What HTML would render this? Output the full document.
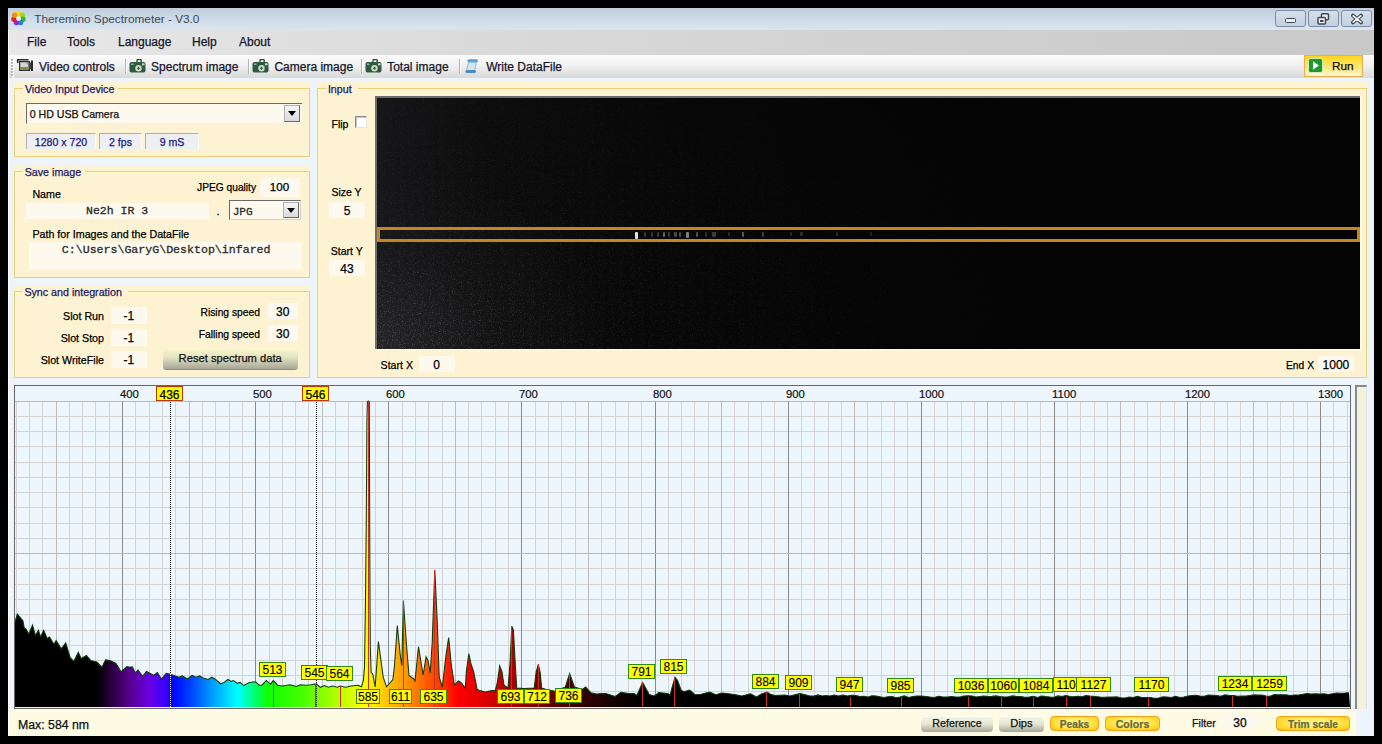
<!DOCTYPE html><html><head><meta charset="utf-8"><style>
*{margin:0;padding:0;box-sizing:border-box}
html,body{width:1382px;height:744px;overflow:hidden;background:#000}
body{position:relative;font-family:"Liberation Sans",sans-serif;font-size:11px;color:#000}
.a{position:absolute}
.t{position:absolute;white-space:nowrap;line-height:1}
#win{position:absolute;left:8px;top:8px;width:1366px;height:728px;background:#edf4fb;overflow:hidden}
.grp{position:absolute;background:#fdf3d3}
.gb{position:absolute;border:1px solid #e9d07c;box-shadow:inset 1px 1px 0 #fffcc8}
.fld{position:absolute;background:#fdf9ee}
.wbtn{position:absolute;top:2px;height:17px;border:1px solid #7d8da3;border-radius:3px;background:linear-gradient(#d6e0ec,#c3d0df)}
</style></head><body><div id="win">
<div class="a" style="left:0px;top:0px;width:1366px;height:22px;background:linear-gradient(#bfcddc,#cfdbe8 50%,#dae5f1)"></div>
<svg class="a" style="left:2px;top:2px" width="17" height="17" viewBox="0 0 17 17">
<circle cx="8.5" cy="3.8" r="2.7" fill="#ffd21e"/><circle cx="12.3" cy="5.3" r="2.7" fill="#9ada2a"/><circle cx="13" cy="9.2" r="2.7" fill="#2eb82e"/>
<circle cx="10.6" cy="12.5" r="2.7" fill="#1e88d0"/><circle cx="6.4" cy="12.5" r="2.7" fill="#8a2ad0"/><circle cx="4" cy="9.2" r="2.7" fill="#e01e1a"/><circle cx="4.7" cy="5.3" r="2.7" fill="#f28a1e"/>
<circle cx="8.5" cy="8.6" r="2.4" fill="#eef2f8"/></svg>

<div class="wbtn" style="left:1267px;width:31px"></div>
<div class="wbtn" style="left:1300px;width:31px"></div>
<div class="wbtn" style="left:1333px;width:31px"></div>
<div class="a" style="left:1277px;top:10px;width:11px;height:5px;border:1.5px solid #404850;border-radius:1.5px;background:#e8eef4"></div>
<svg class="a" style="left:1309px;top:5px" width="13" height="12" viewBox="0 0 13 12"><rect x="4.5" y="0.8" width="7" height="6" rx="1" fill="#eef2f6" stroke="#404850" stroke-width="1.5"/><rect x="1" y="4.5" width="7.5" height="6.5" rx="1" fill="#eef2f6" stroke="#404850" stroke-width="1.5"/><rect x="3" y="7" width="3.5" height="2" fill="#404850"/></svg>
<svg class="a" style="left:1342px;top:5px" width="14" height="12" viewBox="0 0 14 12"><path d="M3,2.6 L11,9.4 M11,2.6 L3,9.4" stroke="#3c4450" stroke-width="3.8" stroke-linecap="round"/><path d="M3.2,2.8 L10.8,9.2 M10.8,2.8 L3.2,9.2" stroke="#f4f6f8" stroke-width="1.7" stroke-linecap="round"/></svg>
<div class="a" style="left:0px;top:22px;width:1366px;height:25px;background:linear-gradient(90deg,#e8e8e8,#d8d8d8 40%,#c8c8c8)"></div>





<div class="a" style="left:0px;top:47px;width:1366px;height:23px;background:linear-gradient(#fbfbfb,#f1f1f1 45%,#d9d9d9)"></div>
<div class="a" style="left:3px;top:51px;width:2px;height:2px;background:#b4b8be;box-shadow:1px 1px 0 #fff"></div>
<div class="a" style="left:3px;top:54px;width:2px;height:2px;background:#b4b8be;box-shadow:1px 1px 0 #fff"></div>
<div class="a" style="left:3px;top:57px;width:2px;height:2px;background:#b4b8be;box-shadow:1px 1px 0 #fff"></div>
<div class="a" style="left:3px;top:60px;width:2px;height:2px;background:#b4b8be;box-shadow:1px 1px 0 #fff"></div>
<div class="a" style="left:3px;top:63px;width:2px;height:2px;background:#b4b8be;box-shadow:1px 1px 0 #fff"></div>
<div class="a" style="left:3px;top:66px;width:2px;height:2px;background:#b4b8be;box-shadow:1px 1px 0 #fff"></div>
<svg class="a" style="left:8px;top:50px" width="18" height="15" viewBox="0 0 18 15"><path d="M1.7,5 V1.7 H12.5" fill="none" stroke="#2c2c2c" stroke-width="1.6"/><rect x="3.5" y="3.5" width="10" height="9" fill="#7c7c7c" stroke="#2e2e2e" stroke-width="1"/><rect x="4.5" y="4.5" width="7.5" height="4.5" fill="#d6d6d6"/><rect x="10.5" y="4.5" width="1.8" height="1.8" fill="#e06a6a"/><rect x="4.5" y="9.5" width="8" height="2.2" fill="#8c8c40"/><rect x="13.5" y="4.5" width="1.5" height="7" fill="#505050"/><rect x="15" y="2.5" width="2" height="10.5" fill="#2a2a2a"/></svg>
<div class="a" style="left:117px;top:51px;width:1px;height:15px;background:#b4b4b4;box-shadow:1px 0 0 #fff"></div>
<div class="a" style="left:240px;top:51px;width:1px;height:15px;background:#b4b4b4;box-shadow:1px 0 0 #fff"></div>
<div class="a" style="left:353px;top:51px;width:1px;height:15px;background:#b4b4b4;box-shadow:1px 0 0 #fff"></div>
<div class="a" style="left:451px;top:51px;width:1px;height:15px;background:#b4b4b4;box-shadow:1px 0 0 #fff"></div>
<svg class="a" style="left:121px;top:51px" width="17" height="14" viewBox="0 0 17 14"><rect x="8" y="0.6" width="4.2" height="3" rx="0.6" fill="none" stroke="#2a4834" stroke-width="1.3"/><rect x="0.5" y="3" width="16" height="10.5" rx="2" fill="#2e5a40"/><rect x="2" y="4.5" width="2.5" height="1.5" fill="#90b098"/><rect x="13" y="4.3" width="2.5" height="2" fill="#c8e4d0"/><circle cx="9.5" cy="9.3" r="3.2" fill="#d4dcc8"/><path d="M9.5,7.8V10.8M8,9.3H11" stroke="#2e5a40" stroke-width="1.1"/></svg>
<svg class="a" style="left:244px;top:51px" width="17" height="14" viewBox="0 0 17 14"><rect x="8" y="0.6" width="4.2" height="3" rx="0.6" fill="none" stroke="#2a4834" stroke-width="1.3"/><rect x="0.5" y="3" width="16" height="10.5" rx="2" fill="#2e5a40"/><rect x="2" y="4.5" width="2.5" height="1.5" fill="#90b098"/><rect x="13" y="4.3" width="2.5" height="2" fill="#c8e4d0"/><circle cx="9.5" cy="9.3" r="3.2" fill="#d4dcc8"/><path d="M9.5,7.8V10.8M8,9.3H11" stroke="#2e5a40" stroke-width="1.1"/></svg>
<svg class="a" style="left:357px;top:51px" width="17" height="14" viewBox="0 0 17 14"><rect x="8" y="0.6" width="4.2" height="3" rx="0.6" fill="none" stroke="#2a4834" stroke-width="1.3"/><rect x="0.5" y="3" width="16" height="10.5" rx="2" fill="#2e5a40"/><rect x="2" y="4.5" width="2.5" height="1.5" fill="#90b098"/><rect x="13" y="4.3" width="2.5" height="2" fill="#c8e4d0"/><circle cx="9.5" cy="9.3" r="3.2" fill="#d4dcc8"/><path d="M9.5,7.8V10.8M8,9.3H11" stroke="#2e5a40" stroke-width="1.1"/></svg>
<svg class="a" style="left:456px;top:50px" width="16" height="16" viewBox="0 0 16 16"><path d="M4.5,4 L12.5,4 L10.5,12.5 L2.5,12.5Z" fill="#d2e6f6" stroke="#82acd2" stroke-width="0.8"/><path d="M5,1.2 C2.8,1.2 2.8,4.2 5,4.2 L12.5,4.2 C14.5,4.2 14.5,1.2 12.5,1.2Z" fill="#5c9ed6"/><path d="M3,12 C0.8,12 0.8,15 3,15 L10.5,15 C12.5,15 12.5,12 10.5,12Z" fill="#4a8cc4"/></svg>





<div class="a" style="left:1296px;top:47px;width:59px;height:22px;border:1px solid #e6ae4e;background:linear-gradient(#ffd61a,#ffe66a 50%,#fff6d6)"></div>
<svg class="a" style="left:1300px;top:50px" width="15" height="15" viewBox="0 0 15 15"><rect x="0.5" y="0.5" width="14" height="14" rx="2" fill="#1c9a2c" stroke="#f0fae8" stroke-width="0.7"/><path d="M5,3.2 L10.8,7.5 L5,11.8Z" fill="#fff"/></svg>

<div class="a" style="left:6px;top:74px;width:296px;height:75px;background:#fdf3d3"></div><div class="a" style="left:6px;top:80px;width:296px;height:69px;border:1px solid #e8cf78;box-shadow:inset 1px 1px 0 #fffcc4"></div><div class="a" style="left:14.899999999999999px;top:74px;width:95.0px;height:12px;background:#fdf3d3"></div>
<div class="a" style="left:6px;top:157px;width:296px;height:113px;background:#fdf3d3"></div><div class="a" style="left:6px;top:163px;width:296px;height:107px;border:1px solid #e8cf78;box-shadow:inset 1px 1px 0 #fffcc4"></div><div class="a" style="left:14.7px;top:157px;width:62.0px;height:12px;background:#fdf3d3"></div>
<div class="a" style="left:6px;top:277px;width:296px;height:93px;background:#fdf3d3"></div><div class="a" style="left:6px;top:283px;width:296px;height:87px;border:1px solid #e8cf78;box-shadow:inset 1px 1px 0 #fffcc4"></div><div class="a" style="left:14.399999999999999px;top:277px;width:105.5px;height:12px;background:#fdf3d3"></div>
<div class="a" style="left:309px;top:74px;width:1050px;height:296px;background:#fdf3d3"></div><div class="a" style="left:309px;top:80px;width:1050px;height:290px;border:1px solid #e8cf78;box-shadow:inset 1px 1px 0 #fffcc4"></div><div class="a" style="left:317.9px;top:74px;width:32.0px;height:12px;background:#fdf3d3"></div>
<div class="a" style="left:18px;top:95px;width:276px;height:21px;background:#fdf9ee;border-top:1px solid #6a6a6a;border-left:1px solid #6a6a6a;border-bottom:1px solid #f6f0dc"></div>
<div class="a" style="left:276px;top:97px;width:16px;height:17px;background:linear-gradient(#f6f6f6,#dadada);border:1px solid #b0b0b0;border-right-color:#6a6a6a;border-bottom-color:#6a6a6a"></div>
<svg class="a" style="left:280px;top:103px" width="9" height="5"><path d="M0,0 L8,0 L4,5Z" fill="#000"/></svg>

<div class="a" style="left:18px;top:125px;width:70px;height:16px;background:#eeeff3;border-top:1px solid #b0b0b0;border-left:1px solid #b0b0b0;border-right:1px solid #fcfcfc"></div>

<div class="a" style="left:91px;top:125px;width:43px;height:16px;background:#eeeff3;border-top:1px solid #b0b0b0;border-left:1px solid #b0b0b0;border-right:1px solid #fcfcfc"></div>

<div class="a" style="left:137px;top:125px;width:54px;height:16px;background:#eeeff3;border-top:1px solid #b0b0b0;border-left:1px solid #b0b0b0;border-right:1px solid #fcfcfc"></div>



<div class="a" style="left:252px;top:170px;width:40px;height:19px;background:#fdf9ee"></div>

<div class="a" style="left:18px;top:195px;width:183px;height:16px;background:#fdf9ee"></div>


<div class="a" style="left:221px;top:192px;width:72px;height:20px;background:#fdf9ee;border:1px solid #6a6a6a;border-right-color:#d0d0d0;border-bottom-color:#d0d0d0"></div>
<div class="a" style="left:275px;top:194px;width:16px;height:16px;background:linear-gradient(#f6f6f6,#dadada);border:1px solid #b0b0b0;border-right-color:#6a6a6a;border-bottom-color:#6a6a6a"></div>
<svg class="a" style="left:279px;top:200px" width="9" height="5"><path d="M0,0 L8,0 L4,5Z" fill="#000"/></svg>


<div class="a" style="left:21px;top:234px;width:273px;height:28px;background:#fdf9ee"></div>


<div class="a" style="left:103px;top:299px;width:36px;height:17px;background:#fdf9ee"></div>


<div class="a" style="left:103px;top:321px;width:36px;height:17px;background:#fdf9ee"></div>


<div class="a" style="left:103px;top:343px;width:36px;height:17px;background:#fdf9ee"></div>


<div class="a" style="left:260px;top:295px;width:30px;height:16px;background:#fdf9ee"></div>


<div class="a" style="left:260px;top:317px;width:30px;height:16px;background:#fdf9ee"></div>

<div class="a" style="left:155px;top:342px;width:135px;height:19px;border-radius:3px;background:linear-gradient(#f4f4c6,#e2e2c4 40%,#a6a696);box-shadow:0 1px 0 #8e8e80"></div>


<div class="a" style="left:347px;top:108px;width:12px;height:12px;background:#fff;border:1px solid #8a8a8a;border-right-color:#e4e4e4;border-bottom-color:#e4e4e4;box-shadow:inset 1px 1px 0 #c4c4c4"></div>

<div class="a" style="left:321px;top:194px;width:36px;height:16px;background:#fdf9ee"></div>


<div class="a" style="left:321px;top:252px;width:36px;height:16px;background:#fdf9ee"></div>


<div class="a" style="left:411px;top:348px;width:36px;height:16px;background:#fdf9ee"></div>


<div class="a" style="left:1310px;top:348px;width:36px;height:16px;background:#fdf9ee"></div>

<div class="a" style="left:367px;top:88px;width:985px;height:253px;background:#060607;border-top:2px solid #6c6c6c;border-left:2px solid #6c6c6c;box-shadow:1px 1px 0 #fffbea"></div>
<div class="a" style="left:369px;top:90px;width:983px;height:251px;background:radial-gradient(ellipse 240px 180px at 0% 100%,rgba(40,40,42,.8),rgba(30,30,32,.3) 55%,rgba(0,0,0,0) 100%),linear-gradient(90deg,#161618,#0d0d0e 10%,#080809 28%,#050506 50%,#040405)"></div>
<svg class="a" style="left:369px;top:90px" width="983" height="251"><defs><filter id="nz" x="0" y="0" width="100%" height="100%"><feTurbulence type="fractalNoise" baseFrequency="0.9" numOctaves="2" seed="4"/><feColorMatrix type="matrix" values="0 0 0 0 0.7  0 0 0 0 0.7  0 0 0 0 0.72  0 0 0 1.6 -0.85"/></filter>
<radialGradient id="nm" gradientUnits="userSpaceOnUse" cx="0" cy="251" r="700" gradientTransform="translate(0,251) scale(1,0.55) translate(0,-251)"><stop offset="0" stop-color="#fff" stop-opacity="0.55"/><stop offset="0.3" stop-color="#fff" stop-opacity="0.2"/><stop offset="1" stop-color="#fff" stop-opacity="0.02"/></radialGradient><mask id="mm"><rect width="983" height="251" fill="url(#nm)"/></mask></defs>
<rect width="983" height="251" filter="url(#nz)" mask="url(#mm)"/></svg>
<div class="a" style="left:369px;top:219px;width:983px;height:15px;border:3px solid #c6861f"></div>
<div class="a" style="left:627px;top:224px;width:3px;height:7px;background:rgb(225,225,225);border-radius:1px;filter:blur(0.3px)"></div>
<div class="a" style="left:636px;top:224px;width:2px;height:5px;background:rgb(55,55,55);border-radius:1px;filter:blur(0.3px)"></div>
<div class="a" style="left:643px;top:224px;width:2px;height:5px;background:rgb(50,50,50);border-radius:1px;filter:blur(0.3px)"></div>
<div class="a" style="left:649px;top:224px;width:2px;height:5px;background:rgb(60,60,60);border-radius:1px;filter:blur(0.3px)"></div>
<div class="a" style="left:655px;top:224px;width:2px;height:5px;background:rgb(95,95,95);border-radius:1px;filter:blur(0.3px)"></div>
<div class="a" style="left:660px;top:224px;width:2px;height:5px;background:rgb(55,55,55);border-radius:1px;filter:blur(0.3px)"></div>
<div class="a" style="left:666px;top:224px;width:3px;height:5px;background:rgb(70,70,70);border-radius:1px;filter:blur(0.3px)"></div>
<div class="a" style="left:671px;top:224px;width:2px;height:5px;background:rgb(75,75,75);border-radius:1px;filter:blur(0.3px)"></div>
<div class="a" style="left:678px;top:224px;width:3px;height:6px;background:rgb(125,125,125);border-radius:1px;filter:blur(0.3px)"></div>
<div class="a" style="left:688px;top:224px;width:2px;height:5px;background:rgb(75,75,75);border-radius:1px;filter:blur(0.3px)"></div>
<div class="a" style="left:697px;top:224px;width:2px;height:5px;background:rgb(45,45,45);border-radius:1px;filter:blur(0.3px)"></div>
<div class="a" style="left:704px;top:224px;width:4px;height:5px;background:rgb(60,60,60);border-radius:1px;filter:blur(0.3px)"></div>
<div class="a" style="left:720px;top:224px;width:2px;height:4px;background:rgb(40,40,40);border-radius:1px;filter:blur(0.3px)"></div>
<div class="a" style="left:734px;top:224px;width:2px;height:5px;background:rgb(90,90,90);border-radius:1px;filter:blur(0.3px)"></div>
<div class="a" style="left:754px;top:224px;width:2px;height:5px;background:rgb(60,60,60);border-radius:1px;filter:blur(0.3px)"></div>
<div class="a" style="left:782px;top:224px;width:2px;height:4px;background:rgb(40,40,40);border-radius:1px;filter:blur(0.3px)"></div>
<div class="a" style="left:792px;top:224px;width:3px;height:4px;background:rgb(45,45,45);border-radius:1px;filter:blur(0.3px)"></div>
<div class="a" style="left:828px;top:224px;width:2px;height:4px;background:rgb(40,40,40);border-radius:1px;filter:blur(0.3px)"></div>
<div class="a" style="left:862px;top:224px;width:2px;height:4px;background:rgb(35,35,35);border-radius:1px;filter:blur(0.3px)"></div>
<svg class="a" style="left:6px;top:377px" width="1337" height="324" viewBox="14 385 1337 324" shape-rendering="crispEdges">
<rect x="14" y="385" width="1337" height="324" fill="#edf5fd"/>
<path d="M16.5,402V707M29.5,402V707M42.5,402V707M69.5,402V707M82.5,402V707M95.5,402V707M109.5,402V707M135.5,402V707M149.5,402V707M162.5,402V707M175.5,402V707M202.5,402V707M215.5,402V707M229.5,402V707M242.5,402V707M269.5,402V707M282.5,402V707M295.5,402V707M308.5,402V707M335.5,402V707M348.5,402V707M362.5,402V707M375.5,402V707M402.5,402V707M415.5,402V707M428.5,402V707M442.5,402V707M468.5,402V707M481.5,402V707M495.5,402V707M508.5,402V707M535.5,402V707M548.5,402V707M561.5,402V707M575.5,402V707M601.5,402V707M615.5,402V707M628.5,402V707M641.5,402V707M668.5,402V707M681.5,402V707M694.5,402V707M708.5,402V707M734.5,402V707M748.5,402V707M761.5,402V707M774.5,402V707M801.5,402V707M814.5,402V707M828.5,402V707M841.5,402V707M867.5,402V707M881.5,402V707M894.5,402V707M907.5,402V707M934.5,402V707M947.5,402V707M961.5,402V707M974.5,402V707M1001.5,402V707M1014.5,402V707M1027.5,402V707M1040.5,402V707M1067.5,402V707M1080.5,402V707M1094.5,402V707M1107.5,402V707M1134.5,402V707M1147.5,402V707M1160.5,402V707M1174.5,402V707M1200.5,402V707M1214.5,402V707M1227.5,402V707M1240.5,402V707M1267.5,402V707M1280.5,402V707M1293.5,402V707M1307.5,402V707M1333.5,402V707M1347.5,402V707" stroke="#d3d3d3" stroke-width="1"/>
<path d="M15,416.5H1350M15,431.5H1350M15,446.5H1350M15,462.5H1350M15,477.5H1350M15,492.5H1350M15,507.5H1350M15,523.5H1350M15,538.5H1350M15,568.5H1350M15,584.5H1350M15,599.5H1350M15,614.5H1350M15,630.5H1350M15,645.5H1350M15,660.5H1350M15,675.5H1350M15,691.5H1350" stroke="#d3d3d3" stroke-width="1"/>
<path d="M56.5,402V707M189.5,402V707M322.5,402V707M455.5,402V707M588.5,402V707M721.5,402V707M854.5,402V707M987.5,402V707M1120.5,402V707M1253.5,402V707" stroke="#bcbcbc" stroke-width="1"/>
<path d="M122.5,402V707M255.5,402V707M388.5,402V707M521.5,402V707M655.5,402V707M788.5,402V707M921.5,402V707M1054.5,402V707M1187.5,402V707M1320.5,402V707" stroke="#8a8a8a" stroke-width="1"/>
<path d="M15,401.5H1350M15,553.5H1350" stroke="#a6d06c" stroke-width="1"/>
<path d="M170.5,402V707" stroke="#000" stroke-width="1" stroke-dasharray="1,1"/>
<path d="M316.5,402V707" stroke="#000" stroke-width="1" stroke-dasharray="1,1"/>
<defs><linearGradient id="sg" gradientUnits="userSpaceOnUse" x1="14" y1="0" x2="1350" y2="0"><stop offset="0.0614" stop-color="#000000"/><stop offset="0.0734" stop-color="#2a0040"/><stop offset="0.0868" stop-color="#580090"/><stop offset="0.1018" stop-color="#6a00e6"/><stop offset="0.1138" stop-color="#3a00ff"/><stop offset="0.1183" stop-color="#0000ff"/><stop offset="0.1317" stop-color="#0040ff"/><stop offset="0.1504" stop-color="#00a8ff"/><stop offset="0.1677" stop-color="#00ffff"/><stop offset="0.1781" stop-color="#00ff88"/><stop offset="0.1901" stop-color="#10ff00"/><stop offset="0.2141" stop-color="#40ff00"/><stop offset="0.2365" stop-color="#a0ff00"/><stop offset="0.2530" stop-color="#d8ff00"/><stop offset="0.2635" stop-color="#ffff00"/><stop offset="0.2777" stop-color="#ffc800"/><stop offset="0.2927" stop-color="#ff9800"/><stop offset="0.3076" stop-color="#ff6000"/><stop offset="0.3226" stop-color="#ff2800"/><stop offset="0.3323" stop-color="#ff0000"/><stop offset="0.3488" stop-color="#e40000"/><stop offset="0.3713" stop-color="#b00000"/><stop offset="0.3937" stop-color="#7a0000"/><stop offset="0.4199" stop-color="#3c0000"/><stop offset="0.4461" stop-color="#180000"/><stop offset="0.4686" stop-color="#000000"/></linearGradient></defs>
<path d="M15,707 L15.0,622.0 L17.3,614.0 L22.9,620.7 L24.3,628.0 L25.8,628.8 L28.8,634.0 L32.5,625.0 L35.4,635.5 L38.4,630.3 L40.6,637.0 L43.6,630.3 L47.2,638.4 L49.5,637.0 L53.9,644.3 L56.1,640.6 L61.3,648.8 L65.7,642.9 L70.2,657.6 L73.8,661.3 L78.3,652.5 L81.2,658.4 L86.4,655.4 L90.8,660.6 L96.8,662.0 L101.9,667.2 L105.6,659.8 L110.0,660.6 L116.0,663.5 L121.1,671.7 L127.0,666.5 L130.0,667.3 L132.4,666.8 L135.2,672.9 L138.0,670.1 L142.7,676.2 L146.5,671.5 L153.5,675.3 L157.3,672.5 L161.5,679.0 L166.2,673.4 L169.5,673.9 L173.3,675.3 L178.9,677.2 L182.2,675.8 L187.4,679.0 L192.1,675.3 L195.9,677.2 L199.6,675.8 L203.4,678.1 L208.1,679.5 L211.9,677.2 L215.6,679.5 L220.8,683.8 L224.1,682.4 L227.9,679.5 L231.2,681.4 L233.5,680.5 L237.3,683.3 L240.1,682.4 L243.9,685.6 L245.0,684.7 L249.3,682.6 L255.4,681.7 L259.3,685.2 L261.9,685.2 L266.3,680.4 L270.6,684.3 L273.2,680.4 L277.6,685.2 L281.5,686.0 L285.8,685.6 L290.1,684.7 L296.2,686.5 L300.6,684.7 L305.8,685.2 L311.0,684.7 L316.2,683.9 L320.5,687.3 L324.4,685.6 L328.3,687.3 L332.7,686.0 L337.0,687.3 L340.5,686.0 L345.7,687.3 L350.9,686.0 L357.8,685.2 L361.5,686.8 L363.5,680.0 L364.5,667.0 L365.5,600.0 L366.3,520.0 L366.9,421.0 L367.4,402.0 L368.3,401.0 L369.3,402.0 L369.7,520.0 L370.0,600.0 L370.3,646.5 L371.1,672.3 L372.7,673.9 L375.2,686.8 L378.4,641.6 L380.8,659.4 L383.2,677.1 L386.5,686.8 L392.9,679.5 L394.5,665.8 L397.3,625.5 L400.2,654.5 L401.8,665.8 L403.4,600.5 L406.6,646.5 L409.0,675.5 L412.3,677.9 L413.0,678.0 L415.0,681.0 L418.5,646.7 L421.1,662.8 L423.1,675.0 L426.1,656.8 L428.1,660.8 L430.2,672.9 L432.2,642.7 L434.8,570.1 L437.2,620.5 L439.2,677.0 L442.3,687.0 L446.3,652.7 L448.7,637.6 L451.3,664.8 L454.4,685.0 L458.4,681.0 L461.4,683.0 L465.4,688.0 L466.3,671.8 L468.8,653.7 L471.0,663.8 L473.7,671.8 L477.1,689.3 L479.8,690.6 L485.2,692.0 L491.9,690.6 L495.2,690.6 L497.3,682.6 L499.7,665.8 L502.0,671.8 L504.0,685.3 L508.0,688.0 L510.0,663.8 L511.8,626.1 L513.4,630.2 L515.4,666.5 L516.7,688.0 L524.1,688.6 L534.2,688.0 L536.2,671.8 L538.3,664.4 L540.3,673.2 L541.6,688.0 L548.0,690.0 L555.0,691.3 L565.4,687.0 L569.6,673.4 L574.4,687.0 L582.4,689.4 L585.6,687.0 L590.8,692.7 L596.5,694.1 L601.2,693.6 L605.9,693.6 L615.3,696.5 L620.9,692.2 L628.5,693.6 L634.1,693.6 L636.9,695.5 L642.6,682.4 L649.2,694.6 L653.9,696.0 L657.6,693.6 L658.5,692.5 L668.0,693.4 L670.2,695.1 L671.9,688.2 L675.0,677.3 L677.6,680.4 L681.0,690.0 L683.6,691.7 L689.7,690.0 L695.0,694.7 L701.0,694.3 L709.7,692.1 L715.8,694.7 L721.8,693.0 L727.0,693.4 L735.7,694.7 L741.8,696.0 L750.5,693.8 L756.6,696.9 L760.9,694.3 L767.0,692.1 L770.5,694.3 L775.0,695.6 L780.0,695.2 L785.0,695.0 L790.0,696.0 L800.0,693.6 L810.0,696.0 L814.0,696.1 L818.0,694.9 L822.0,695.9 L826.0,695.5 L830.0,696.0 L834.3,695.0 L838.6,696.0 L842.9,695.1 L847.1,696.0 L851.4,695.3 L855.7,695.4 L860.0,696.5 L864.0,696.2 L868.0,697.1 L872.0,695.7 L876.0,695.9 L880.0,696.8 L884.0,697.5 L888.0,696.8 L892.0,696.5 L896.0,697.7 L900.0,697.0 L904.3,695.9 L908.6,697.5 L912.9,696.4 L917.1,696.1 L921.4,696.0 L925.7,696.4 L930.0,697.0 L934.3,697.4 L938.6,696.2 L942.9,697.0 L947.1,697.1 L951.4,696.5 L955.7,696.9 L960.0,697.0 L964.0,695.9 L968.0,695.8 L972.0,696.1 L976.0,697.0 L980.0,696.4 L984.0,696.1 L988.0,696.6 L992.0,696.3 L996.0,695.9 L1000.0,696.5 L1004.2,696.9 L1008.3,696.8 L1012.5,695.9 L1016.7,696.6 L1020.8,696.6 L1025.0,697.3 L1029.2,697.1 L1033.3,696.2 L1037.5,697.6 L1041.7,696.0 L1045.8,696.6 L1050.0,697.0 L1054.0,697.2 L1058.0,695.9 L1062.0,696.5 L1066.0,695.5 L1070.0,696.6 L1074.0,696.7 L1078.0,696.2 L1082.0,696.8 L1086.0,695.5 L1090.0,696.0 L1100.0,697.0 L1104.2,697.2 L1108.3,697.1 L1112.5,697.1 L1116.7,696.9 L1120.8,697.7 L1125.0,697.9 L1129.2,697.0 L1133.3,697.5 L1137.5,696.3 L1141.7,697.6 L1145.8,697.6 L1150.0,697.5 L1154.3,698.3 L1158.6,697.9 L1162.9,696.9 L1167.1,697.1 L1171.4,697.6 L1175.7,696.3 L1180.0,697.5 L1184.0,696.9 L1188.0,696.0 L1192.0,695.6 L1196.0,695.2 L1200.0,696.0 L1204.2,696.3 L1208.3,695.0 L1212.5,695.2 L1216.7,695.4 L1220.8,696.3 L1225.0,694.7 L1229.2,695.4 L1233.3,695.6 L1237.5,696.2 L1241.7,696.0 L1245.8,696.1 L1250.0,695.5 L1254.0,694.9 L1258.0,695.1 L1262.0,695.0 L1266.0,696.1 L1270.0,696.2 L1274.0,694.6 L1278.0,694.7 L1282.0,694.8 L1286.0,694.8 L1290.0,695.5 L1294.3,695.1 L1298.6,695.0 L1302.9,694.2 L1307.1,693.5 L1311.4,694.1 L1315.7,693.8 L1320.0,694.0 L1324.1,693.8 L1328.3,694.4 L1332.4,693.7 L1336.6,693.1 L1340.7,693.2 L1344.9,693.1 L1349.0,692.8 L1350,707 Z" fill="url(#sg)" shape-rendering="auto"/>
<path d="M15.0,622.0 L17.3,614.0 L22.9,620.7 L24.3,628.0 L25.8,628.8 L28.8,634.0 L32.5,625.0 L35.4,635.5 L38.4,630.3 L40.6,637.0 L43.6,630.3 L47.2,638.4 L49.5,637.0 L53.9,644.3 L56.1,640.6 L61.3,648.8 L65.7,642.9 L70.2,657.6 L73.8,661.3 L78.3,652.5 L81.2,658.4 L86.4,655.4 L90.8,660.6 L96.8,662.0 L101.9,667.2 L105.6,659.8 L110.0,660.6 L116.0,663.5 L121.1,671.7 L127.0,666.5 L130.0,667.3 L132.4,666.8 L135.2,672.9 L138.0,670.1 L142.7,676.2 L146.5,671.5 L153.5,675.3 L157.3,672.5 L161.5,679.0 L166.2,673.4 L169.5,673.9 L173.3,675.3 L178.9,677.2 L182.2,675.8 L187.4,679.0 L192.1,675.3 L195.9,677.2 L199.6,675.8 L203.4,678.1 L208.1,679.5 L211.9,677.2 L215.6,679.5 L220.8,683.8 L224.1,682.4 L227.9,679.5 L231.2,681.4 L233.5,680.5 L237.3,683.3 L240.1,682.4 L243.9,685.6 L245.0,684.7 L249.3,682.6 L255.4,681.7 L259.3,685.2 L261.9,685.2 L266.3,680.4 L270.6,684.3 L273.2,680.4 L277.6,685.2 L281.5,686.0 L285.8,685.6 L290.1,684.7 L296.2,686.5 L300.6,684.7 L305.8,685.2 L311.0,684.7 L316.2,683.9 L320.5,687.3 L324.4,685.6 L328.3,687.3 L332.7,686.0 L337.0,687.3 L340.5,686.0 L345.7,687.3 L350.9,686.0 L357.8,685.2 L361.5,686.8 L363.5,680.0 L364.5,667.0 L365.5,600.0 L366.3,520.0 L366.9,421.0 L367.4,402.0 L368.3,401.0 L369.3,402.0 L369.7,520.0 L370.0,600.0 L370.3,646.5 L371.1,672.3 L372.7,673.9 L375.2,686.8 L378.4,641.6 L380.8,659.4 L383.2,677.1 L386.5,686.8 L392.9,679.5 L394.5,665.8 L397.3,625.5 L400.2,654.5 L401.8,665.8 L403.4,600.5 L406.6,646.5 L409.0,675.5 L412.3,677.9 L413.0,678.0 L415.0,681.0 L418.5,646.7 L421.1,662.8 L423.1,675.0 L426.1,656.8 L428.1,660.8 L430.2,672.9 L432.2,642.7 L434.8,570.1 L437.2,620.5 L439.2,677.0 L442.3,687.0 L446.3,652.7 L448.7,637.6 L451.3,664.8 L454.4,685.0 L458.4,681.0 L461.4,683.0 L465.4,688.0 L466.3,671.8 L468.8,653.7 L471.0,663.8 L473.7,671.8 L477.1,689.3 L479.8,690.6 L485.2,692.0 L491.9,690.6 L495.2,690.6 L497.3,682.6 L499.7,665.8 L502.0,671.8 L504.0,685.3 L508.0,688.0 L510.0,663.8 L511.8,626.1 L513.4,630.2 L515.4,666.5 L516.7,688.0 L524.1,688.6 L534.2,688.0 L536.2,671.8 L538.3,664.4 L540.3,673.2 L541.6,688.0 L548.0,690.0 L555.0,691.3 L565.4,687.0 L569.6,673.4 L574.4,687.0 L582.4,689.4 L585.6,687.0 L590.8,692.7 L596.5,694.1 L601.2,693.6 L605.9,693.6 L615.3,696.5 L620.9,692.2 L628.5,693.6 L634.1,693.6 L636.9,695.5 L642.6,682.4 L649.2,694.6 L653.9,696.0 L657.6,693.6 L658.5,692.5 L668.0,693.4 L670.2,695.1 L671.9,688.2 L675.0,677.3 L677.6,680.4 L681.0,690.0 L683.6,691.7 L689.7,690.0 L695.0,694.7 L701.0,694.3 L709.7,692.1 L715.8,694.7 L721.8,693.0 L727.0,693.4 L735.7,694.7 L741.8,696.0 L750.5,693.8 L756.6,696.9 L760.9,694.3 L767.0,692.1 L770.5,694.3 L775.0,695.6 L780.0,695.2 L785.0,695.0 L790.0,696.0 L800.0,693.6 L810.0,696.0 L814.0,696.1 L818.0,694.9 L822.0,695.9 L826.0,695.5 L830.0,696.0 L834.3,695.0 L838.6,696.0 L842.9,695.1 L847.1,696.0 L851.4,695.3 L855.7,695.4 L860.0,696.5 L864.0,696.2 L868.0,697.1 L872.0,695.7 L876.0,695.9 L880.0,696.8 L884.0,697.5 L888.0,696.8 L892.0,696.5 L896.0,697.7 L900.0,697.0 L904.3,695.9 L908.6,697.5 L912.9,696.4 L917.1,696.1 L921.4,696.0 L925.7,696.4 L930.0,697.0 L934.3,697.4 L938.6,696.2 L942.9,697.0 L947.1,697.1 L951.4,696.5 L955.7,696.9 L960.0,697.0 L964.0,695.9 L968.0,695.8 L972.0,696.1 L976.0,697.0 L980.0,696.4 L984.0,696.1 L988.0,696.6 L992.0,696.3 L996.0,695.9 L1000.0,696.5 L1004.2,696.9 L1008.3,696.8 L1012.5,695.9 L1016.7,696.6 L1020.8,696.6 L1025.0,697.3 L1029.2,697.1 L1033.3,696.2 L1037.5,697.6 L1041.7,696.0 L1045.8,696.6 L1050.0,697.0 L1054.0,697.2 L1058.0,695.9 L1062.0,696.5 L1066.0,695.5 L1070.0,696.6 L1074.0,696.7 L1078.0,696.2 L1082.0,696.8 L1086.0,695.5 L1090.0,696.0 L1100.0,697.0 L1104.2,697.2 L1108.3,697.1 L1112.5,697.1 L1116.7,696.9 L1120.8,697.7 L1125.0,697.9 L1129.2,697.0 L1133.3,697.5 L1137.5,696.3 L1141.7,697.6 L1145.8,697.6 L1150.0,697.5 L1154.3,698.3 L1158.6,697.9 L1162.9,696.9 L1167.1,697.1 L1171.4,697.6 L1175.7,696.3 L1180.0,697.5 L1184.0,696.9 L1188.0,696.0 L1192.0,695.6 L1196.0,695.2 L1200.0,696.0 L1204.2,696.3 L1208.3,695.0 L1212.5,695.2 L1216.7,695.4 L1220.8,696.3 L1225.0,694.7 L1229.2,695.4 L1233.3,695.6 L1237.5,696.2 L1241.7,696.0 L1245.8,696.1 L1250.0,695.5 L1254.0,694.9 L1258.0,695.1 L1262.0,695.0 L1266.0,696.1 L1270.0,696.2 L1274.0,694.6 L1278.0,694.7 L1282.0,694.8 L1286.0,694.8 L1290.0,695.5 L1294.3,695.1 L1298.6,695.0 L1302.9,694.2 L1307.1,693.5 L1311.4,694.1 L1315.7,693.8 L1320.0,694.0 L1324.1,693.8 L1328.3,694.4 L1332.4,693.7 L1336.6,693.1 L1340.7,693.2 L1344.9,693.1 L1349.0,692.8" fill="none" stroke="#0e3a0a" stroke-width="1.05" shape-rendering="auto"/>
<path d="M170.5,674V707" stroke="#fff" stroke-width="1" stroke-dasharray="1,1"/>
<path d="M316.5,684V707" stroke="#000" stroke-width="1" stroke-dasharray="1,1"/>
<path d="M273.5,680.4V707M315.5,684.0V707M340.5,686.0V707M368.5,401.0V707M403.5,600.5V707M434.5,570.1V707M511.5,626.0V707M538.5,664.4V707M569.5,673.4V707M642.5,682.4V707M674.5,677.3V707M766.5,692.1V707M799.5,693.6V707M850.5,696.5V707M901.5,697.0V707M968.5,697.0V707M1001.5,696.5V707M1033.5,697.0V707M1066.5,696.5V707M1090.5,696.0V707M1148.5,697.5V707M1232.5,695.5V707M1266.5,695.5V707" stroke="#c8321e" stroke-width="1.4"/>
<path d="M15,707.5H1350" stroke="#f4f0f4" stroke-width="1"/>
<rect x="14.5" y="385.5" width="1336" height="323" fill="none" stroke="#686868" stroke-width="1"/>
<rect x="259.5" y="662.5" width="26" height="14" fill="#ffff00" stroke="#2e8a10" stroke-width="1"/>
<text x="272.5" y="674" text-anchor="middle" font-family="Liberation Sans" font-size="12" fill="#000" stroke="#000" stroke-width="0.12" shape-rendering="auto">513</text>
<rect x="301.5" y="665.5" width="26" height="14" fill="#ffff00" stroke="#2e8a10" stroke-width="1"/>
<text x="314.5" y="677" text-anchor="middle" font-family="Liberation Sans" font-size="12" fill="#000" stroke="#000" stroke-width="0.12" shape-rendering="auto">545</text>
<rect x="326.5" y="666.5" width="26" height="14" fill="#ffff00" stroke="#2e8a10" stroke-width="1"/>
<text x="339.5" y="678" text-anchor="middle" font-family="Liberation Sans" font-size="12" fill="#000" stroke="#000" stroke-width="0.12" shape-rendering="auto">564</text>
<rect x="356.5" y="689.5" width="23" height="14" fill="#ffff00" stroke="#2e8a10" stroke-width="1"/>
<text x="368.0" y="701" text-anchor="middle" font-family="Liberation Sans" font-size="12" fill="#000" stroke="#000" stroke-width="0.12" shape-rendering="auto">585</text>
<rect x="389.5" y="689.5" width="22" height="14" fill="#ffff00" stroke="#2e8a10" stroke-width="1"/>
<text x="400.5" y="701" text-anchor="middle" font-family="Liberation Sans" font-size="12" fill="#000" stroke="#000" stroke-width="0.12" shape-rendering="auto">611</text>
<rect x="420.5" y="689.5" width="26" height="14" fill="#ffff00" stroke="#2e8a10" stroke-width="1"/>
<text x="433.5" y="701" text-anchor="middle" font-family="Liberation Sans" font-size="12" fill="#000" stroke="#000" stroke-width="0.12" shape-rendering="auto">635</text>
<rect x="497.5" y="689.5" width="26" height="14" fill="#ffff00" stroke="#2e8a10" stroke-width="1"/>
<text x="510.5" y="701" text-anchor="middle" font-family="Liberation Sans" font-size="12" fill="#000" stroke="#000" stroke-width="0.12" shape-rendering="auto">693</text>
<rect x="524.5" y="689.5" width="25" height="14" fill="#ffff00" stroke="#2e8a10" stroke-width="1"/>
<text x="537.0" y="701" text-anchor="middle" font-family="Liberation Sans" font-size="12" fill="#000" stroke="#000" stroke-width="0.12" shape-rendering="auto">712</text>
<rect x="555.5" y="688.5" width="26" height="14" fill="#ffff00" stroke="#2e8a10" stroke-width="1"/>
<text x="568.5" y="700" text-anchor="middle" font-family="Liberation Sans" font-size="12" fill="#000" stroke="#000" stroke-width="0.12" shape-rendering="auto">736</text>
<rect x="628.5" y="664.5" width="26" height="14" fill="#ffff00" stroke="#2e8a10" stroke-width="1"/>
<text x="641.5" y="676" text-anchor="middle" font-family="Liberation Sans" font-size="12" fill="#000" stroke="#000" stroke-width="0.12" shape-rendering="auto">791</text>
<rect x="660.5" y="659.5" width="26" height="14" fill="#ffff00" stroke="#2e8a10" stroke-width="1"/>
<text x="673.5" y="671" text-anchor="middle" font-family="Liberation Sans" font-size="12" fill="#000" stroke="#000" stroke-width="0.12" shape-rendering="auto">815</text>
<rect x="752.5" y="674.5" width="26" height="14" fill="#ffff00" stroke="#2e8a10" stroke-width="1"/>
<text x="765.5" y="686" text-anchor="middle" font-family="Liberation Sans" font-size="12" fill="#000" stroke="#000" stroke-width="0.12" shape-rendering="auto">884</text>
<rect x="785.5" y="675.5" width="26" height="14" fill="#ffff00" stroke="#2e8a10" stroke-width="1"/>
<text x="798.5" y="687" text-anchor="middle" font-family="Liberation Sans" font-size="12" fill="#000" stroke="#000" stroke-width="0.12" shape-rendering="auto">909</text>
<rect x="836.5" y="677.5" width="26" height="14" fill="#ffff00" stroke="#2e8a10" stroke-width="1"/>
<text x="849.5" y="689" text-anchor="middle" font-family="Liberation Sans" font-size="12" fill="#000" stroke="#000" stroke-width="0.12" shape-rendering="auto">947</text>
<rect x="887.5" y="678.5" width="26" height="14" fill="#ffff00" stroke="#2e8a10" stroke-width="1"/>
<text x="900.5" y="690" text-anchor="middle" font-family="Liberation Sans" font-size="12" fill="#000" stroke="#000" stroke-width="0.12" shape-rendering="auto">985</text>
<rect x="954.5" y="678.5" width="33" height="14" fill="#ffff00" stroke="#2e8a10" stroke-width="1"/>
<text x="971.0" y="690" text-anchor="middle" font-family="Liberation Sans" font-size="12" fill="#000" stroke="#000" stroke-width="0.12" shape-rendering="auto">1036</text>
<rect x="988.5" y="678.5" width="30" height="14" fill="#ffff00" stroke="#2e8a10" stroke-width="1"/>
<text x="1003.5" y="690" text-anchor="middle" font-family="Liberation Sans" font-size="12" fill="#000" stroke="#000" stroke-width="0.12" shape-rendering="auto">1060</text>
<rect x="1019.5" y="678.5" width="33" height="14" fill="#ffff00" stroke="#2e8a10" stroke-width="1"/>
<text x="1036.0" y="690" text-anchor="middle" font-family="Liberation Sans" font-size="12" fill="#000" stroke="#000" stroke-width="0.12" shape-rendering="auto">1084</text>
<rect x="1053.5" y="677.5" width="32" height="14" fill="#ffff00" stroke="#2e8a10" stroke-width="1"/>
<text x="1069.5" y="689" text-anchor="middle" font-family="Liberation Sans" font-size="12" fill="#000" stroke="#000" stroke-width="0.12" shape-rendering="auto">1109</text>
<rect x="1076.5" y="677.5" width="34" height="14" fill="#ffff00" stroke="#2e8a10" stroke-width="1"/>
<text x="1093.5" y="689" text-anchor="middle" font-family="Liberation Sans" font-size="12" fill="#000" stroke="#000" stroke-width="0.12" shape-rendering="auto">1127</text>
<rect x="1134.5" y="677.5" width="34" height="14" fill="#ffff00" stroke="#2e8a10" stroke-width="1"/>
<text x="1151.5" y="689" text-anchor="middle" font-family="Liberation Sans" font-size="12" fill="#000" stroke="#000" stroke-width="0.12" shape-rendering="auto">1170</text>
<rect x="1218.5" y="676.5" width="33" height="14" fill="#ffff00" stroke="#2e8a10" stroke-width="1"/>
<text x="1235.0" y="688" text-anchor="middle" font-family="Liberation Sans" font-size="12" fill="#000" stroke="#000" stroke-width="0.12" shape-rendering="auto">1234</text>
<rect x="1252.5" y="676.5" width="34" height="14" fill="#ffff00" stroke="#2e8a10" stroke-width="1"/>
<text x="1269.5" y="688" text-anchor="middle" font-family="Liberation Sans" font-size="12" fill="#000" stroke="#000" stroke-width="0.12" shape-rendering="auto">1259</text>
<text x="120" y="398" font-family="Liberation Sans" font-size="11.3" fill="#111" stroke="#111" stroke-width="0.2">400</text>
<text x="253" y="398" font-family="Liberation Sans" font-size="11.3" fill="#111" stroke="#111" stroke-width="0.2">500</text>
<text x="386" y="398" font-family="Liberation Sans" font-size="11.3" fill="#111" stroke="#111" stroke-width="0.2">600</text>
<text x="519" y="398" font-family="Liberation Sans" font-size="11.3" fill="#111" stroke="#111" stroke-width="0.2">700</text>
<text x="653" y="398" font-family="Liberation Sans" font-size="11.3" fill="#111" stroke="#111" stroke-width="0.2">800</text>
<text x="786" y="398" font-family="Liberation Sans" font-size="11.3" fill="#111" stroke="#111" stroke-width="0.2">900</text>
<text x="919" y="398" font-family="Liberation Sans" font-size="11.3" fill="#111" stroke="#111" stroke-width="0.2">1000</text>
<text x="1052" y="398" font-family="Liberation Sans" font-size="11.3" fill="#111" stroke="#111" stroke-width="0.2">1100</text>
<text x="1185" y="398" font-family="Liberation Sans" font-size="11.3" fill="#111" stroke="#111" stroke-width="0.2">1200</text>
<text x="1318" y="398" font-family="Liberation Sans" font-size="11.3" fill="#111" stroke="#111" stroke-width="0.2">1300</text>
<rect x="156.5" y="386.5" width="26" height="14" fill="#ffff00" stroke="#b83a00" stroke-width="1.4"/>
<text x="169.5" y="398.5" text-anchor="middle" font-family="Liberation Sans" font-size="12" fill="#000" stroke="#000" stroke-width="0.25">436</text>
<rect x="302.5" y="386.5" width="26" height="14" fill="#ffff00" stroke="#b83a00" stroke-width="1.4"/>
<text x="315.5" y="398.5" text-anchor="middle" font-family="Liberation Sans" font-size="12" fill="#000" stroke="#000" stroke-width="0.25">546</text>
</svg>
<div class="a" style="left:1347px;top:377px;width:12px;height:324px;background:#f3f1dc;border-left:2px solid #8a8a8a;border-top:2px solid #8a8a8a;border-right:1px solid #e2e2e2"></div>
<div class="a" style="left:0px;top:701px;width:1348px;height:27px;background:#fdfbe4"></div>

<div class="a" style="left:913px;top:708px;width:72px;height:16px;border-radius:4px;background:linear-gradient(#f6f6e8,#e6e6d2 50%,#a6a696);box-shadow:inset 0 1px 0 #fff"></div>
<div class="a" style="left:991px;top:708px;width:45px;height:16px;border-radius:4px;background:linear-gradient(#f6f6e8,#e6e6d2 50%,#a6a696);box-shadow:inset 0 1px 0 #fff"></div>
<div class="a" style="left:1042px;top:708px;width:49px;height:15px;border-radius:4px;border:1px solid #f0a21e;background:radial-gradient(ellipse at 50% 45%,#fff27a 30%,#ffd41e 80%,#f8b000)"></div>
<div class="a" style="left:1097px;top:708px;width:55px;height:15px;border-radius:4px;border:1px solid #f0a21e;background:radial-gradient(ellipse at 50% 45%,#fff27a 30%,#ffd41e 80%,#f8b000)"></div>

<div class="a" style="left:1215px;top:706px;width:34px;height:16px;background:#fdf9ee"></div>

<div class="a" style="left:1268px;top:708px;width:74px;height:15px;border-radius:4px;border:1px solid #f0a21e;background:radial-gradient(ellipse at 50% 45%,#fff27a 30%,#ffd41e 80%,#f8b000)"></div>
<div class="a" style="left:0px;top:22px;width:1px;height:706px;background:#fff"></div>
<svg class="a" style="left:-8px;top:-8px" width="1382" height="744"><text x="34.20" y="23.20" font-size="11.8" fill="#3a4656" stroke="#3a4656" stroke-width="0" text-anchor="start" font-family="'Liberation Sans',sans-serif">Theremino Spectrometer - V3.0</text><text x="27.00" y="46.30" font-size="12" fill="#15152a" stroke="#15152a" stroke-width="0.25" text-anchor="start" font-family="'Liberation Sans',sans-serif">File</text><text x="67.00" y="46.30" font-size="12" fill="#15152a" stroke="#15152a" stroke-width="0.25" text-anchor="start" font-family="'Liberation Sans',sans-serif">Tools</text><text x="118.00" y="46.30" font-size="12" fill="#15152a" stroke="#15152a" stroke-width="0.25" text-anchor="start" font-family="'Liberation Sans',sans-serif">Language</text><text x="192.00" y="46.30" font-size="12" fill="#15152a" stroke="#15152a" stroke-width="0.25" text-anchor="start" font-family="'Liberation Sans',sans-serif">Help</text><text x="239.00" y="46.30" font-size="12" fill="#15152a" stroke="#15152a" stroke-width="0.25" text-anchor="start" font-family="'Liberation Sans',sans-serif">About</text><text x="39.00" y="70.90" font-size="12" fill="#15152a" stroke="#15152a" stroke-width="0.25" text-anchor="start" font-family="'Liberation Sans',sans-serif">Video controls</text><text x="151.10" y="70.90" font-size="12" fill="#15152a" stroke="#15152a" stroke-width="0.25" text-anchor="start" font-family="'Liberation Sans',sans-serif">Spectrum image</text><text x="274.40" y="70.90" font-size="12" fill="#15152a" stroke="#15152a" stroke-width="0.25" text-anchor="start" font-family="'Liberation Sans',sans-serif">Camera image</text><text x="387.20" y="70.90" font-size="12" fill="#15152a" stroke="#15152a" stroke-width="0.25" text-anchor="start" font-family="'Liberation Sans',sans-serif">Total image</text><text x="486.20" y="70.90" font-size="12" fill="#15152a" stroke="#15152a" stroke-width="0.25" text-anchor="start" font-family="'Liberation Sans',sans-serif">Write DataFile</text><text x="1331.90" y="69.80" font-size="11.8" fill="#120c00" stroke="#120c00" stroke-width="0.25" text-anchor="start" font-family="'Liberation Sans',sans-serif">Run</text><text x="24.90" y="92.60" font-size="10.7" fill="#1a1866" stroke="#1a1866" stroke-width="0.25" text-anchor="start" font-family="'Liberation Sans',sans-serif">Video Input Device</text><text x="24.70" y="175.80" font-size="10.7" fill="#1a1866" stroke="#1a1866" stroke-width="0.25" text-anchor="start" font-family="'Liberation Sans',sans-serif">Save image</text><text x="24.40" y="295.90" font-size="10.7" fill="#1a1866" stroke="#1a1866" stroke-width="0.25" text-anchor="start" font-family="'Liberation Sans',sans-serif">Sync and integration</text><text x="327.90" y="92.50" font-size="10.7" fill="#1a1866" stroke="#1a1866" stroke-width="0.25" text-anchor="start" font-family="'Liberation Sans',sans-serif">Input</text><text x="29.70" y="118.00" font-size="10.6" fill="#111" stroke="#111" stroke-width="0.25" text-anchor="start" font-family="'Liberation Sans',sans-serif">0 HD USB Camera</text><text x="61.00" y="145.80" font-size="10.6" fill="#18187e" stroke="#18187e" stroke-width="0.25" text-anchor="middle" font-family="'Liberation Sans',sans-serif">1280 x 720</text><text x="120.50" y="145.80" font-size="10.6" fill="#18187e" stroke="#18187e" stroke-width="0.25" text-anchor="middle" font-family="'Liberation Sans',sans-serif">2 fps</text><text x="172.00" y="145.80" font-size="10.6" fill="#18187e" stroke="#18187e" stroke-width="0.25" text-anchor="middle" font-family="'Liberation Sans',sans-serif">9 mS</text><text x="32.40" y="197.90" font-size="10.7" fill="#000" stroke="#000" stroke-width="0.25" text-anchor="start" font-family="'Liberation Sans',sans-serif">Name</text><text x="256.00" y="190.90" font-size="10.2" fill="#000" stroke="#000" stroke-width="0.25" text-anchor="end" font-family="'Liberation Sans',sans-serif">JPEG quality</text><text x="279.50" y="190.90" font-size="11.6" fill="#000" stroke="#000" stroke-width="0.25" text-anchor="middle" font-family="'Liberation Sans',sans-serif">100</text><text x="86.00" y="214.00" font-size="11.5" fill="#2a2a2a" stroke="#2a2a2a" stroke-width="0.3" text-anchor="start" font-family="'Liberation Mono',monospace">Ne2h IR 3</text><text x="216.50" y="215.00" font-size="11" fill="#000" stroke="#000" stroke-width="0.25" text-anchor="start" font-family="'Liberation Sans',sans-serif">.</text><text x="232.70" y="214.90" font-size="11.1" fill="#2a2a2a" stroke="#2a2a2a" stroke-width="0.3" text-anchor="start" font-family="'Liberation Mono',monospace">JPG</text><text x="32.40" y="237.90" font-size="10.7" fill="#000" stroke="#000" stroke-width="0.25" text-anchor="start" font-family="'Liberation Sans',sans-serif">Path for Images and the DataFile</text><text x="61.80" y="253.20" font-size="11.6" fill="#2a2a2a" stroke="#2a2a2a" stroke-width="0.3" text-anchor="start" font-family="'Liberation Mono',monospace">C:\Users\GaryG\Desktop\infared</text><text x="104.00" y="319.60" font-size="10.7" fill="#000" stroke="#000" stroke-width="0.25" text-anchor="end" font-family="'Liberation Sans',sans-serif">Slot Run</text><text x="128.80" y="319.60" font-size="12" fill="#000" stroke="#000" stroke-width="0.25" text-anchor="middle" font-family="'Liberation Sans',sans-serif">-1</text><text x="104.00" y="341.80" font-size="10.7" fill="#000" stroke="#000" stroke-width="0.25" text-anchor="end" font-family="'Liberation Sans',sans-serif">Slot Stop</text><text x="128.80" y="341.80" font-size="12" fill="#000" stroke="#000" stroke-width="0.25" text-anchor="middle" font-family="'Liberation Sans',sans-serif">-1</text><text x="104.00" y="363.60" font-size="10.7" fill="#000" stroke="#000" stroke-width="0.25" text-anchor="end" font-family="'Liberation Sans',sans-serif">Slot WriteFile</text><text x="128.80" y="363.60" font-size="12" fill="#000" stroke="#000" stroke-width="0.25" text-anchor="middle" font-family="'Liberation Sans',sans-serif">-1</text><text x="260.00" y="315.90" font-size="10.3" fill="#000" stroke="#000" stroke-width="0.25" text-anchor="end" font-family="'Liberation Sans',sans-serif">Rising speed</text><text x="282.70" y="315.90" font-size="12" fill="#000" stroke="#000" stroke-width="0.25" text-anchor="middle" font-family="'Liberation Sans',sans-serif">30</text><text x="260.00" y="337.80" font-size="10.3" fill="#000" stroke="#000" stroke-width="0.25" text-anchor="end" font-family="'Liberation Sans',sans-serif">Falling speed</text><text x="282.70" y="337.80" font-size="12" fill="#000" stroke="#000" stroke-width="0.25" text-anchor="middle" font-family="'Liberation Sans',sans-serif">30</text><text x="230.20" y="362.40" font-size="11.2" fill="#111" stroke="#111" stroke-width="0.25" text-anchor="middle" font-family="'Liberation Sans',sans-serif">Reset spectrum data</text><text x="331.50" y="127.60" font-size="10.5" fill="#000" stroke="#000" stroke-width="0.25" text-anchor="start" font-family="'Liberation Sans',sans-serif">Flip</text><text x="331.40" y="196.10" font-size="10.5" fill="#000" stroke="#000" stroke-width="0.25" text-anchor="start" font-family="'Liberation Sans',sans-serif">Size Y</text><text x="347.00" y="214.70" font-size="12" fill="#000" stroke="#000" stroke-width="0.25" text-anchor="middle" font-family="'Liberation Sans',sans-serif">5</text><text x="330.80" y="254.60" font-size="10.5" fill="#000" stroke="#000" stroke-width="0.25" text-anchor="start" font-family="'Liberation Sans',sans-serif">Start Y</text><text x="347.00" y="272.70" font-size="12" fill="#000" stroke="#000" stroke-width="0.25" text-anchor="middle" font-family="'Liberation Sans',sans-serif">43</text><text x="380.60" y="368.60" font-size="10.6" fill="#000" stroke="#000" stroke-width="0.25" text-anchor="start" font-family="'Liberation Sans',sans-serif">Start X</text><text x="436.60" y="368.60" font-size="12" fill="#000" stroke="#000" stroke-width="0.25" text-anchor="middle" font-family="'Liberation Sans',sans-serif">0</text><text x="1286.00" y="368.60" font-size="10.3" fill="#000" stroke="#000" stroke-width="0.25" text-anchor="start" font-family="'Liberation Sans',sans-serif">End X</text><text x="1335.90" y="368.60" font-size="12" fill="#000" stroke="#000" stroke-width="0.25" text-anchor="middle" font-family="'Liberation Sans',sans-serif">1000</text><text x="18.00" y="728.70" font-size="12.3" fill="#111" stroke="#111" stroke-width="0.25" text-anchor="start" font-family="'Liberation Sans',sans-serif">Max: 584 nm</text><text x="957.00" y="726.90" font-size="10.7" fill="#111" stroke="#111" stroke-width="0.25" text-anchor="middle" font-family="'Liberation Sans',sans-serif">Reference</text><text x="1021.50" y="726.90" font-size="11.2" fill="#111" stroke="#111" stroke-width="0.25" text-anchor="middle" font-family="'Liberation Sans',sans-serif">Dips</text><text x="1074.50" y="727.50" font-size="10.2" fill="#6a6a3c" stroke="#6a6a3c" stroke-width="0.25" text-anchor="middle" font-family="'Liberation Sans',sans-serif" font-weight="bold">Peaks</text><text x="1132.50" y="727.50" font-size="10.6" fill="#6a6a3c" stroke="#6a6a3c" stroke-width="0.25" text-anchor="middle" font-family="'Liberation Sans',sans-serif" font-weight="bold">Colors</text><text x="1192.10" y="726.60" font-size="10.7" fill="#111" stroke="#111" stroke-width="0.25" text-anchor="start" font-family="'Liberation Sans',sans-serif">Filter</text><text x="1240.00" y="726.50" font-size="12" fill="#000" stroke="#000" stroke-width="0.25" text-anchor="middle" font-family="'Liberation Sans',sans-serif">30</text><text x="1313.00" y="727.50" font-size="10.2" fill="#6a6a3c" stroke="#6a6a3c" stroke-width="0.25" text-anchor="middle" font-family="'Liberation Sans',sans-serif" font-weight="bold">Trim scale</text></svg>
</div></body></html>
